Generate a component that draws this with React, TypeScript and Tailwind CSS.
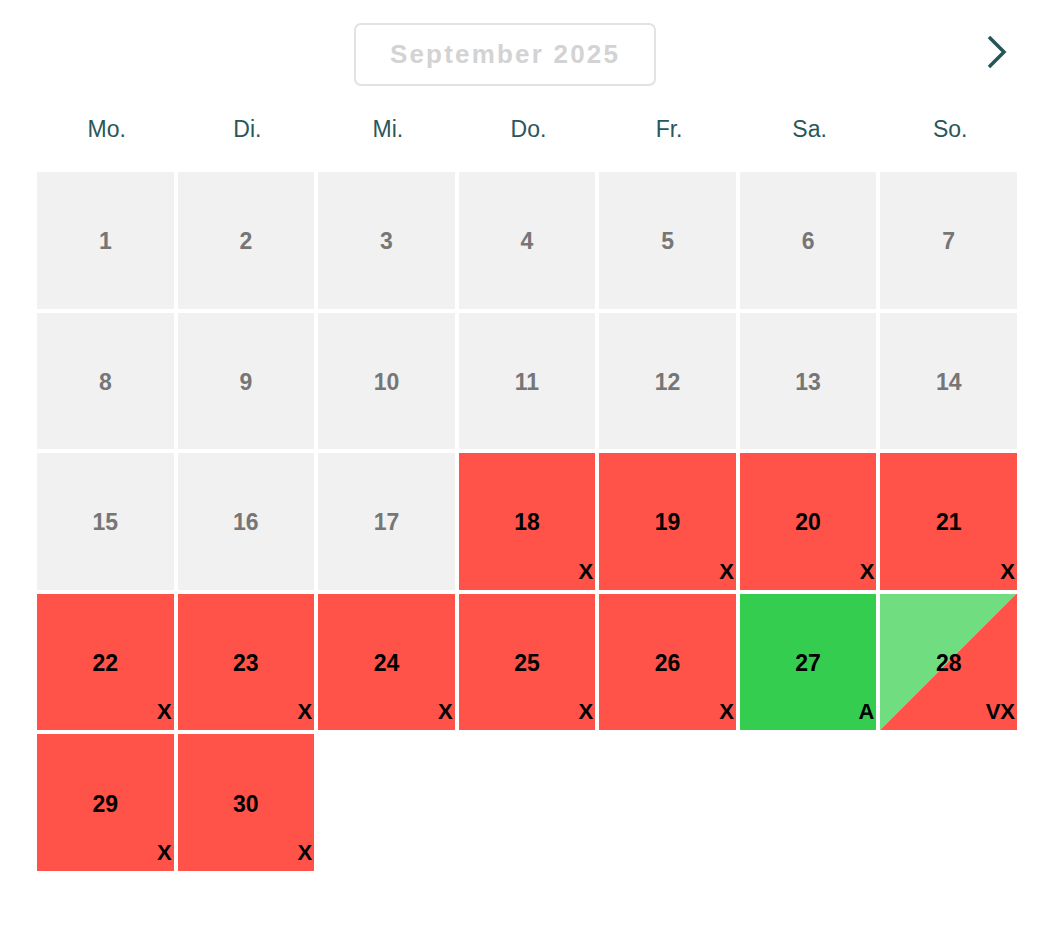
import React from "react"

type Status = "none" | "red" | "green" | "split"

type Day = {
    day: number
    status: Status
    label?: string
}

const weekdays = ["Mo.", "Di.", "Mi.", "Do.", "Fr.", "Sa.", "So."]

const days: Day[] = Array.from({ length: 30 }, (_, i) => {
    const day = i + 1
    if (day < 18) return { day, status: "none" }
    if (day === 27) return { day, status: "green", label: "A" }
    if (day === 28) return { day, status: "split", label: "VX" }
    return { day, status: "red", label: "X" }
})

const cellClass: Record<Status, string> = {
    none: "bg-[#f1f1f1] text-[#767676]",
    red: "bg-[#ff5249] text-black",
    green: "bg-[#35cd4f] text-black",
    split: "bg-[linear-gradient(to_bottom_right,#70dd80_50%,#ff5249_50%)] text-black",
}

const DayCell = ({ d }: { d: Day }) => {
    return (
        <div className={`relative flex aspect-square items-center justify-center ${cellClass[d.status]}`}>
            <span className="pt-[3px] text-[23px] font-bold leading-none">{d.day}</span>
            {d.label ? (
                <span className="absolute bottom-[7px] right-[2px] text-[22px] font-bold leading-none">
                    {d.label}
                </span>
            ) : null}
        </div>
    )
}

export default function App() {
    return (
        <div className="min-h-screen bg-white font-['Liberation_Sans',Arial,sans-serif]">
            <div className="ml-[37px] w-[980px] pt-[23px]">
                <div className="flex items-center">
                    <div className="w-[317px]" />
                    <button className="flex h-[63px] w-[302px] items-center justify-center rounded-[7px] border-2 border-[#e2e2e2] bg-white text-[26px] font-bold tracking-[2.2px] text-[#d3d3d3]">
                        September 2025
                    </button>
                    <div className="flex-1" />
                    <svg width="22" height="34" viewBox="0 0 22 34" className="mr-[9px] mt-[-5px]">
                        <path d="M3 2 L18 17 L3 32" fill="none" stroke="#245658" strokeWidth="3.5" />
                    </svg>
                </div>

                <div className="grid h-[86px] grid-cols-7 items-center gap-1">
                    {weekdays.map((w) => (
                        <div key={w} className="pl-[3px] text-center text-[23px] text-[#2a5759]">
                            {w}
                        </div>
                    ))}
                </div>

                <div className="grid grid-cols-7 gap-1">
                    {days.map((d) => (
                        <DayCell key={d.day} d={d} />
                    ))}
                </div>
            </div>
        </div>
    )
}
